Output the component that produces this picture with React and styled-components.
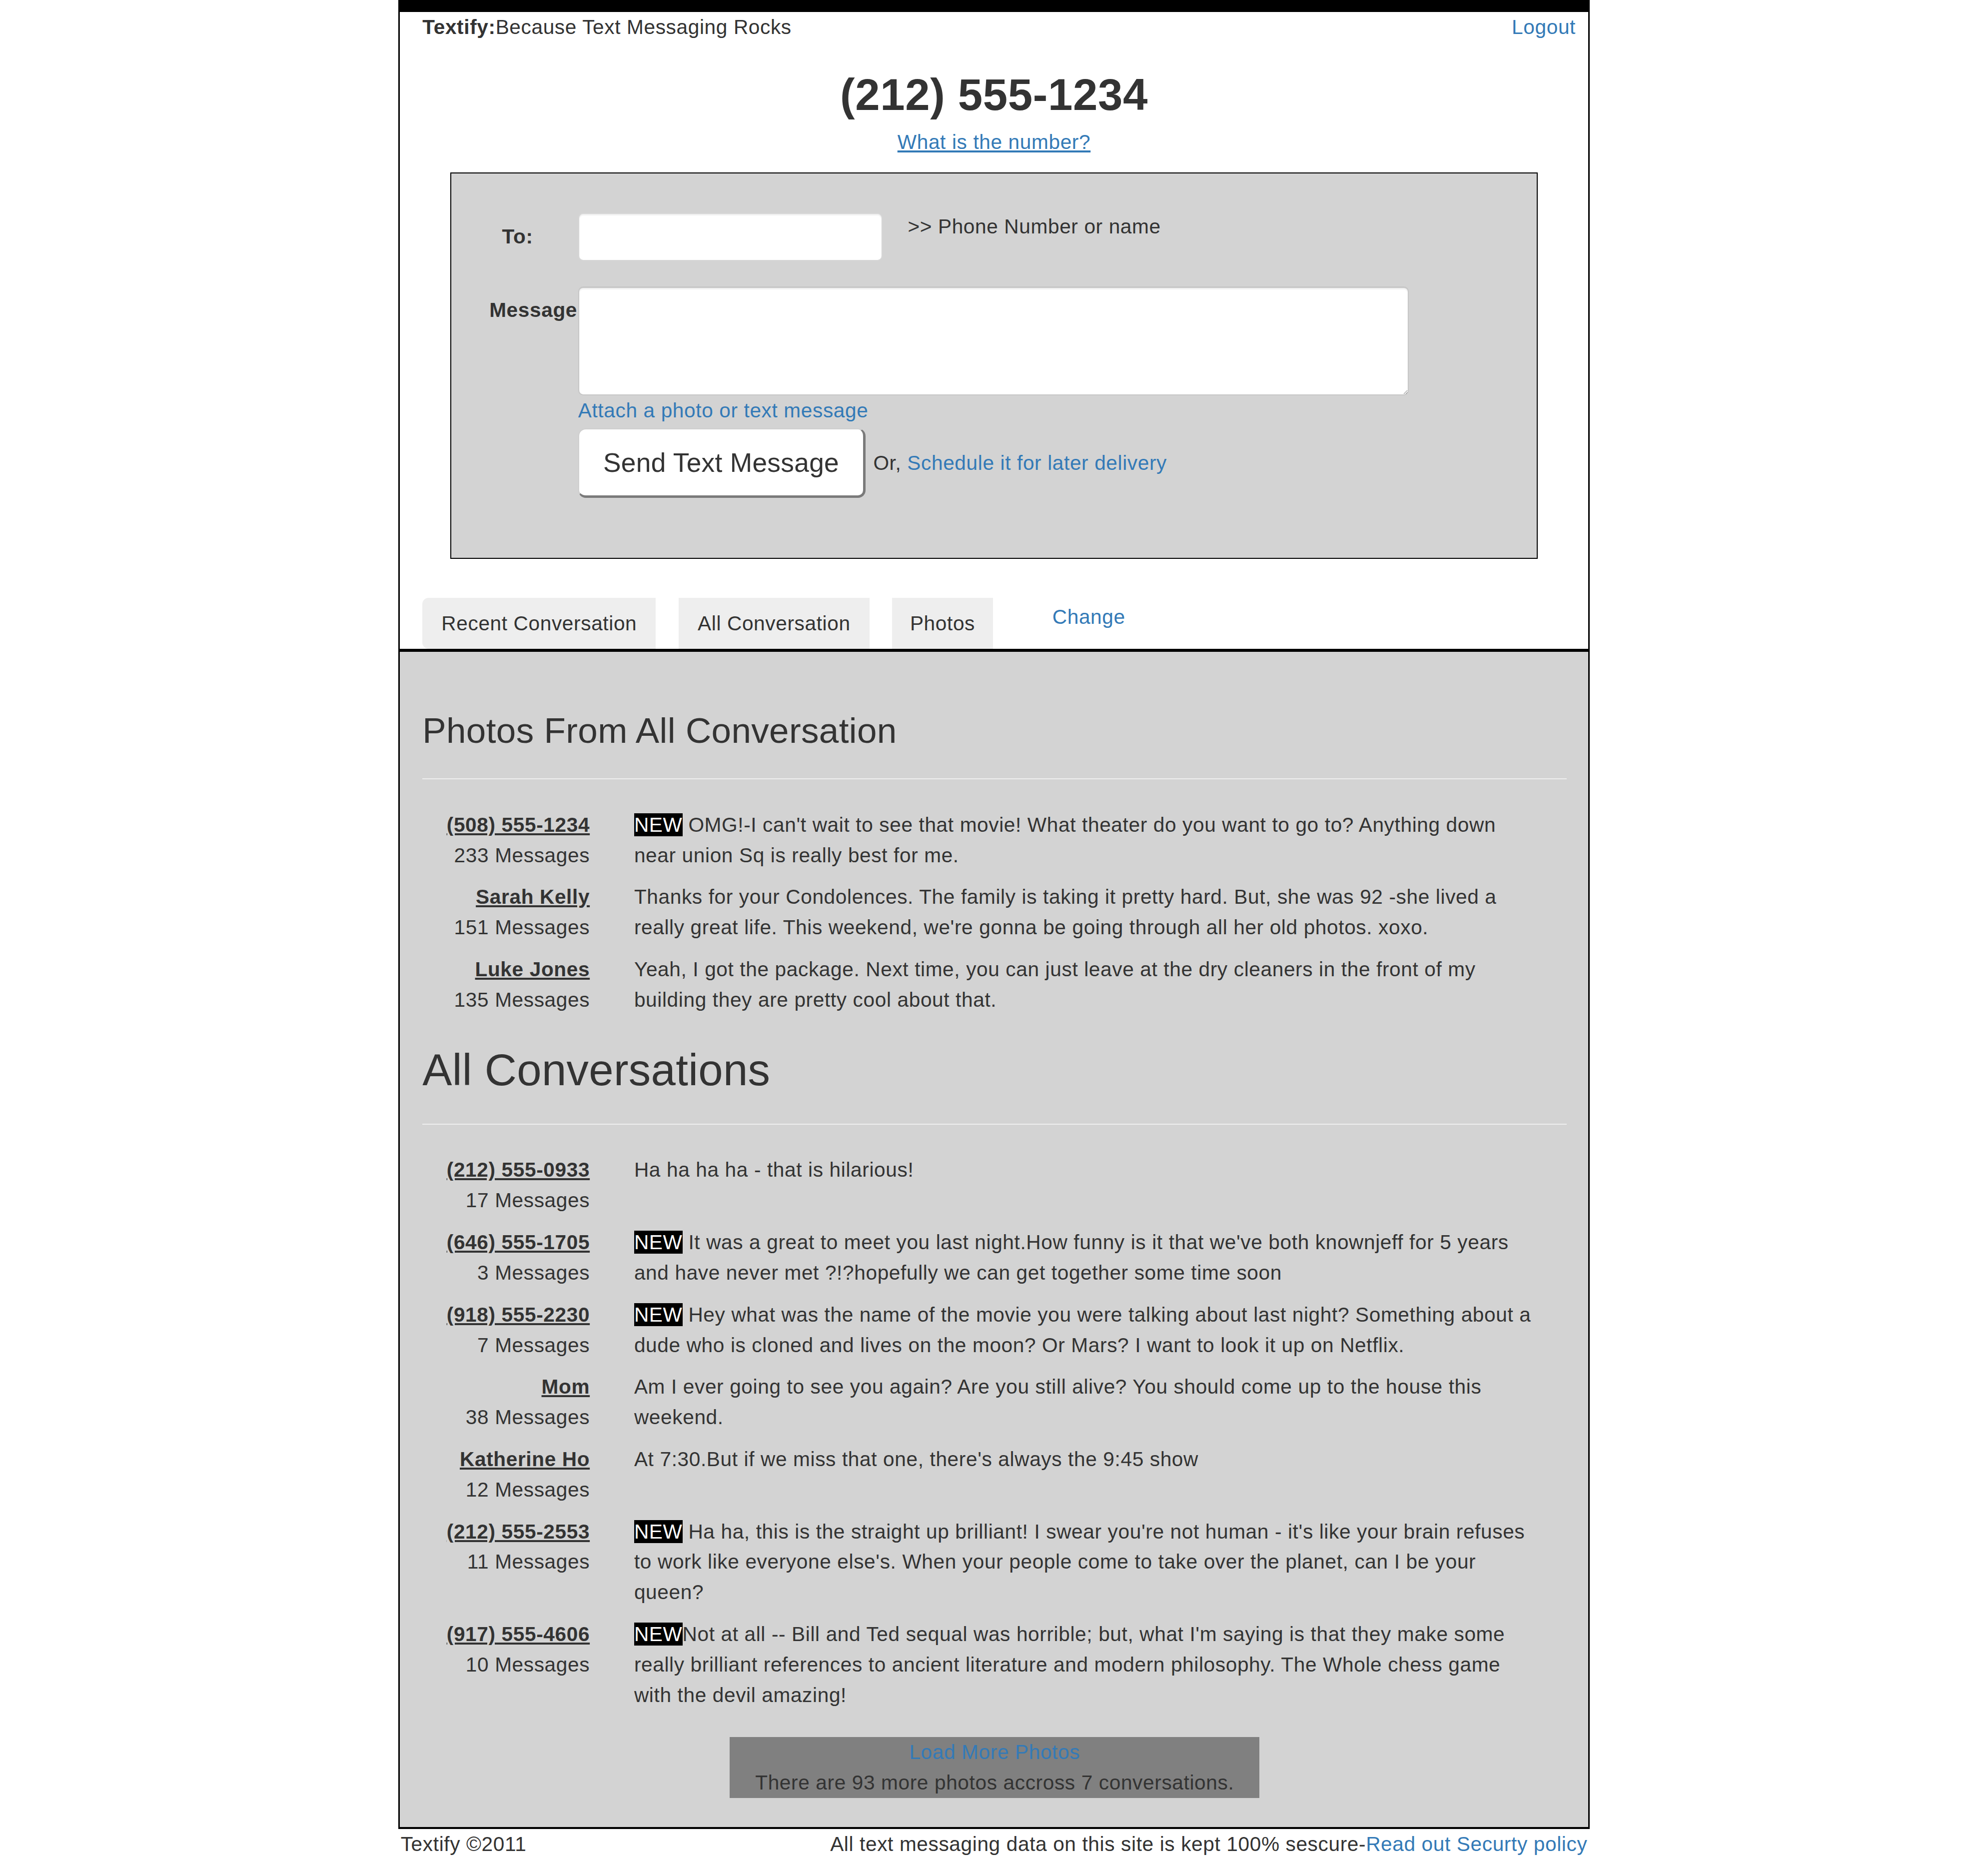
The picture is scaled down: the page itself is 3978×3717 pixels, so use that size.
import React from 'react';
import styled, { createGlobalStyle } from 'styled-components';

const GlobalStyle = createGlobalStyle`
  html, body { margin: 0; padding: 0; background: #fff; }
  body {
    font-family: "Liberation Sans", Arial, Helvetica, sans-serif;
    font-size: 16px;
    line-height: 24px;
    letter-spacing: 0.25px;
    color: #333;
  }
  * { box-sizing: border-box; }
`;

const Zoom = styled.div`
  zoom: 2.537;
`;

const Page = styled.div`
  width: 940px;
  margin: 0 auto;
`;

const Frame = styled.div`
  border: 1.2px solid #000;
  border-top: 9.5px solid #000;
  border-bottom: 1.6px solid #000;
  background: #fff;
`;

const Link = styled.a`
  color: #337ab7;
  text-decoration: ${p => (p.$underline ? 'underline' : 'none')};
  cursor: pointer;
`;

const TopBar = styled.div`
  display: flex;
  justify-content: space-between;
  padding: 0 10px 0 18px;
  line-height: 24px;
`;

const Brand = styled.b`
  font-weight: bold;
`;

const PhoneTitle = styled.h1`
  margin: 22px 0 6px;
  font-size: 35px;
  line-height: 38.5px;
  font-weight: bold;
  text-align: center;
`;

const NumberHelp = styled.div`
  text-align: center;
`;

const ComposeBox = styled.form`
  margin: 12px 40px 0;
  border: 1px solid #000;
  background: #d3d3d3;
  padding: 31px 0 47px;
`;

const FieldRow = styled.div`
  display: grid;
  grid-template-columns: 100px 1fr;
  align-items: start;
  margin-top: ${p => p.$gap || 0}px;
`;

const Label = styled.label`
  font-weight: bold;
  padding-top: 7px;
  padding-left: ${p => p.$indent}px;
`;

const Inline = styled.div`
  display: flex;
  align-items: ${p => (p.$center ? 'center' : 'flex-start')};
`;

const TextInput = styled.input`
  width: 240px;
  height: 38px;
  border: 1px solid #d6d6d6;
  border-radius: 4px;
  background: #fff;
  box-shadow: inset 0 1px 1px rgba(0, 0, 0, 0.075);
  font: inherit;
  padding: 6px 12px;
`;

const Hint = styled.span`
  margin-left: 20px;
  margin-top: -1px;
`;

const MessageArea = styled.textarea`
  display: block;
  width: 655px;
  height: 86px;
  border: 1px solid #c6c6c6;
  border-top-width: 1.4px;
  border-radius: 4px;
  background: #fff;
  box-shadow: inset 0 1px 1px rgba(0, 0, 0, 0.075);
  font: inherit;
  padding: 6px 12px;
  resize: vertical;
`;

const SendButton = styled.button`
  height: 55px;
  padding: 0 19px;
  font-family: inherit;
  font-size: 21px;
  letter-spacing: 0.12px;
  color: #333;
  background: #fff;
  border: 1px solid #cfcfcf;
  border-right: 2px solid #7a7a7a;
  border-bottom: 2px solid #7a7a7a;
  border-radius: 6px;
  cursor: pointer;
`;

const OrText = styled.span`
  margin-left: 6px;
`;

const Tabs = styled.div`
  display: flex;
  align-items: flex-start;
  gap: 18px;
  margin-top: 31px;
  padding-left: 18px;
`;

const Tab = styled.div`
  background: #eee;
  padding: 8px ${p => p.$pad || 15}px;
  line-height: 24px;
  border-radius: ${p => (p.$first ? '5px 0 0 5px' : '0')};
`;

const ChangeLink = styled(Link)`
  margin: 3px 0 0 29px;
`;

const Section = styled.div`
  border-top: 2.4px solid #000;
  background: #d3d3d3;
  padding: 23px 17px 23px 18px;
`;

const SectionTitle = styled.h2`
  margin: 24px 0 0;
  font-weight: normal;
  font-size: ${p => p.$size}px;
  line-height: ${p => p.$size * 1.1}px;
  letter-spacing: ${p => p.$spacing}px;
`;

const Divider = styled.hr`
  border: 0;
  border-top: 1px solid #eee;
  margin: ${p => p.$top}px 0 24px;
`;

const ConvoRow = styled.div`
  display: grid;
  grid-template-columns: 132px 712px;
  column-gap: 35px;
  margin-bottom: 9px;
`;

const Who = styled.div`
  text-align: right;
`;

const WhoName = styled.a`
  display: block;
  font-weight: bold;
  color: #333;
  text-decoration: underline;
`;

const Snippet = styled.div``;

const NewBadge = styled.span`
  background: #000;
  color: #fff;
`;

const LoadMore = styled.div`
  width: 418px;
  margin: 21px auto 0;
  background: #808080;
  text-align: center;
  padding: 0 20px;
  line-height: 24px;
`;

const Footer = styled.div`
  display: flex;
  justify-content: space-between;
  padding: 0 2px;
  line-height: 24px;
`;

const photoConvos = [
  { name: '(508) 555-1234', count: 233, isNew: true, text: "OMG!-I can't wait to see that movie! What theater do you want to go to? Anything down near union Sq is really best for me." },
  { name: 'Sarah Kelly', count: 151, text: "Thanks for your Condolences. The family is taking it pretty hard. But, she was 92 -she lived a really great life. This weekend, we're gonna be going through all her old photos. xoxo." },
  { name: 'Luke Jones', count: 135, text: 'Yeah, I got the package. Next time, you can just leave at the dry cleaners in the front of my building they are pretty cool about that.' },
];

const allConvos = [
  { name: '(212) 555-0933', count: 17, text: 'Ha ha ha ha - that is hilarious!' },
  { name: '(646) 555-1705', count: 3, isNew: true, text: "It was a great to meet you last night.How funny is it that we've both knownjeff for 5 years and have never met ?!?hopefully we can get together some time soon" },
  { name: '(918) 555-2230', count: 7, isNew: true, text: 'Hey what was the name of the movie you were talking about last night? Something about a dude who is cloned and lives on the moon? Or Mars? I want to look it up on Netflix.' },
  { name: 'Mom', count: 38, text: 'Am I ever going to see you again? Are you still alive? You should come up to the house this weekend.' },
  { name: 'Katherine Ho', count: 12, text: "At 7:30.But if we miss that one, there's always the 9:45 show" },
  { name: '(212) 555-2553', count: 11, isNew: true, text: "Ha ha, this is the straight up brilliant! I swear you're not human - it's like your brain refuses to work like everyone else's. When your people come to take over the planet, can I be your queen?" },
  { name: '(917) 555-4606', count: 10, isNew: true, noSpace: true, text: "Not at all -- Bill and Ted sequal was horrible; but, what I'm saying is that they make some really brilliant references to ancient literature and modern philosophy. The Whole chess game with the devil amazing!" },
];

function Conversation({ c }) {
  return (
    <ConvoRow>
      <Who>
        <WhoName>{c.name}</WhoName>
        <div>{c.count} Messages</div>
      </Who>
      <Snippet>
        {c.isNew && <NewBadge>NEW</NewBadge>}
        {c.isNew && !c.noSpace ? ' ' : ''}
        {c.text}
      </Snippet>
    </ConvoRow>
  );
}

export default function App() {
  return (
    <Zoom>
      <GlobalStyle />
      <Page>
        <Frame>
          <TopBar>
            <span>
              <Brand>Textify:</Brand>Because Text Messaging Rocks
            </span>
            <Link>Logout</Link>
          </TopBar>
          <PhoneTitle>(212) 555-1234</PhoneTitle>
          <NumberHelp>
            <Link $underline>What is the number?</Link>
          </NumberHelp>
          <ComposeBox onSubmit={e => e.preventDefault()}>
            <FieldRow>
              <Label $indent={40}>To:</Label>
              <Inline>
                <TextInput type="text" />
                <Hint>&gt;&gt; Phone Number or name</Hint>
              </Inline>
            </FieldRow>
            <FieldRow $gap={20}>
              <Label $indent={30}>Message</Label>
              <MessageArea />
            </FieldRow>
            <FieldRow>
              <span />
              <div>
                <Link>Attach a photo or text message</Link>
              </div>
            </FieldRow>
            <FieldRow $gap={2}>
              <span />
              <Inline $center>
                <SendButton type="button">Send Text Message</SendButton>
                <OrText>
                  Or, <Link>Schedule it for later delivery</Link>
                </OrText>
              </Inline>
            </FieldRow>
          </ComposeBox>
          <Tabs>
            <Tab $first>Recent Conversation</Tab>
            <Tab>All Conversation</Tab>
            <Tab $pad={14}>Photos</Tab>
            <ChangeLink>Change</ChangeLink>
          </Tabs>
          <Section>
            <SectionTitle $size={28} $spacing={0.14}>Photos From All Conversation</SectionTitle>
            <Divider $top={22} />
            {photoConvos.map(c => (
              <Conversation key={c.name} c={c} />
            ))}
            <SectionTitle $size={35} $spacing={0.12}>All Conversations</SectionTitle>
            <Divider $top={23} />
            {allConvos.map(c => (
              <Conversation key={c.name} c={c} />
            ))}
            <LoadMore>
              <Link>Load More Photos</Link>
              <div>There are 93 more photos accross 7 conversations.</div>
            </LoadMore>
          </Section>
        </Frame>
        <Footer>
          <span>Textify ©2011</span>
          <span>
            All text messaging data on this site is kept 100% sescure-<Link>Read out Securty policy</Link>
          </span>
        </Footer>
      </Page>
    </Zoom>
  );
}
